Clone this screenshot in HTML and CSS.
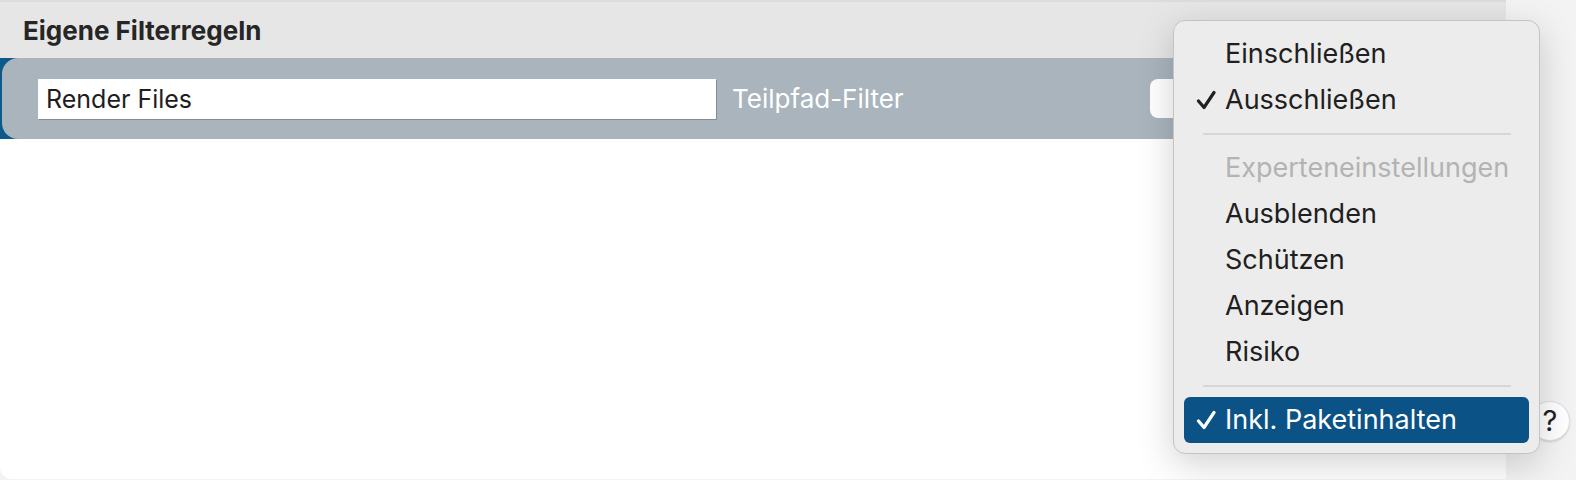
FILE: index.html
```html
<!DOCTYPE html>
<html lang="de">
<head>
    <meta charset="UTF-8">
    <title>Eigene Filterregeln</title>
    <link rel="stylesheet" href="styles.css">
</head>
<body>
    <div class="window">
        <div class="header">Eigene Filterregeln</div>
        <div class="rule-row">
            <div class="rule">
                <div class="path-input">Render Files</div>
                <span class="rule-label">Teilpfad-Filter</span>
                <div class="mode-button"></div>
            </div>
        </div>
    </div>
    <div class="side">
        <div class="help">?</div>
    </div>

    <div class="menu">
        <div class="menu-item">Einschließen</div>
        <div class="menu-item checked">
            <svg class="check" viewBox="0 0 20 20"><path d="M2.5 11 L8 17.5 L18 2.5"/></svg>
            Ausschließen
        </div>
        <div class="separator"></div>
        <div class="menu-item disabled">Experteneinstellungen</div>
        <div class="menu-item">Ausblenden</div>
        <div class="menu-item">Schützen</div>
        <div class="menu-item">Anzeigen</div>
        <div class="menu-item">Risiko</div>
        <div class="separator"></div>
        <div class="menu-item checked selected">
            <svg class="check" viewBox="0 0 20 20"><path d="M2.5 11 L8 17.5 L18 2.5"/></svg>
            Inkl. Paketinhalten
        </div>
    </div>
</body>
</html>
```

FILE: styles.css
```css
body {
    margin: 0;
    height: 480px;
    overflow: hidden;
    display: flex;
    background-color: #f3f3f3;
    font-family: Inter, "Noto Sans", sans-serif;
    color: #222;
}
.window {
    width: 1506px;
    height: 479px;
    background-color: #fff;
    border-bottom-left-radius: 12px;
}
.header {
    height: 56px;
    border-top: 2px solid #dcdcdc;
    background-color: #e6e6e6;
    padding-left: 23px;
    font-size: 26px;
    font-weight: 700;
    line-height: 58px;
    color: #262626;
}
.rule-row {
    background-color: #0b5a8a;
    height: 81px;
}
.rule {
    height: 100%;
    margin-left: 2px;
    background-color: #a9b4bd;
    border-radius: 16px 0 0 16px;
    display: flex;
    align-items: center;
    padding-left: 36px;
}
.path-input {
    width: 670px;
    height: 40px;
    padding-left: 8px;
    background-color: #fff;
    box-shadow: 1px 1px 0 #848d95;
    font-size: 25px;
    line-height: 40px;
    color: #1e1e1e;
}
.rule-label {
    width: 418px;
    margin-left: 16px;
    font-size: 26px;
    color: #fff;
}
.mode-button {
    width: 80px;
    height: 39px;
    background-color: #fff;
    border-radius: 8px;
}
.side {
    flex: 1;
    display: flex;
    flex-direction: column;
    justify-content: flex-end;
    padding-bottom: 39px;
}
.help {
    margin-left: 24px;
    width: 38px;
    height: 38px;
    border-radius: 50%;
    background-color: #fff;
    border: 1px solid #e0e0e0;
    box-shadow: 0 1px 2px rgba(0, 0, 0, 0.15);
    font-size: 29px;
    line-height: 38px;
    text-align: center;
    color: #222;
}
.menu {
    position: absolute;
    left: 1173px;
    top: 20px;
    width: 365px;
    padding: 10px 0;
    background-color: #ececec;
    border: 1px solid #c4c4c4;
    border-radius: 12px;
    box-shadow: 0 10px 36px rgba(0, 0, 0, 0.18);
}
.menu-item {
    position: relative;
    height: 46px;
    margin: 0 10px;
    padding-left: 41px;
    border-radius: 6px;
    font-size: 27px;
    line-height: 46px;
    color: #202020;
}
.menu-item.disabled {
    color: #b3b3b3;
}
.menu-item.selected {
    background-color: #0b5286;
    color: #fff;
}
.check {
    position: absolute;
    left: 12px;
    top: 13px;
    width: 20px;
    height: 20px;
    fill: none;
    stroke: currentColor;
    stroke-width: 3.2;
    stroke-linecap: round;
    stroke-linejoin: round;
}
.separator {
    height: 2px;
    margin: 10px 28px 10px 29px;
    background-color: #d6d6d6;
}
```
